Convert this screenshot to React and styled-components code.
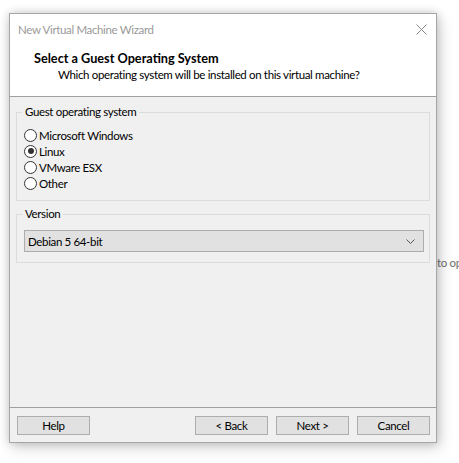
import styled, { createGlobalStyle } from "styled-components";

const Global = createGlobalStyle`
  html, body {
    margin: 0;
    background: #ffffff;
    font-family: Lato, "Noto Sans", "Liberation Sans", sans-serif;
    font-size: 11.5px;
    letter-spacing: -0.35px;
  }
`;

const Page = styled.div`
  position: relative;
  width: 459px;
  height: 463px;
  overflow: hidden;
  padding: 13px 0 0 9px;
  box-sizing: border-box;
`;

const Behind = styled.div`
  position: absolute;
  left: 437px;
  top: 255px;
  color: #6e6e6e;
  line-height: 16px;
  white-space: nowrap;
`;

const Window = styled.div`
  position: relative;
  width: 428px;
  height: 430px;
  box-sizing: border-box;
  border: 1px solid #a6a6a6;
  background: #f0f0f0;
  box-shadow: 0 0 9px rgba(0, 0, 0, 0.18), 3px 5px 14px rgba(0, 0, 0, 0.16);
  display: flex;
  flex-direction: column;
`;

const Header = styled.div`
  background: #ffffff;
  height: 82px;
  border-bottom: 1px solid #a0a0a0;
  display: flex;
  flex-direction: column;
`;

const TitleBar = styled.div`
  height: 30px;
  display: flex;
  align-items: center;
  justify-content: space-between;
  padding: 0 8px 0 8px;
  color: #999999;
`;

const Close = styled.svg`
  width: 11px;
  height: 11px;
  margin-right: 1px;
`;

const Heading = styled.div`
  padding: 7px 0 0 24px;
  font-weight: bold;
  font-size: 12.7px;
  letter-spacing: 0;
  color: #000;
  line-height: 15px;
`;

const SubHeading = styled.div`
  padding: 1px 0 0 48px;
  color: #000;
  line-height: 16px;
`;

const Body = styled.div`
  flex: 1;
  padding: 7px 6px 0 6px;
  display: flex;
  flex-direction: column;
  gap: 5px;
`;

const Group = styled.fieldset`
  margin: 0;
  border: 1px solid #dcdcdc;
  padding: ${(p) => p.$pad};
  display: flex;
  flex-direction: column;
`;

const Legend = styled.legend`
  margin-left: -2px;
  padding: 0 3px;
  line-height: 16px;
  color: #000;
`;

const RadioRow = styled.label`
  display: flex;
  align-items: center;
  height: 16px;
  color: #000;
`;

const Circle = styled.span`
  width: 11px;
  height: 11px;
  border: 1px solid #333333;
  border-radius: 50%;
  background: #ffffff;
  display: flex;
  align-items: center;
  justify-content: center;
  margin-right: 2px;
  flex: none;
  &::after {
    content: "";
    width: 6px;
    height: 6px;
    border-radius: 50%;
    background: ${(p) => (p.$on ? "#333333" : "transparent")};
  }
`;

const Select = styled.div`
  height: 20px;
  border: 1px solid #adadad;
  background: #e1e1e1;
  display: flex;
  align-items: center;
  justify-content: space-between;
  padding: 0 8px 0 3px;
  color: #000;
`;

const Footer = styled.div`
  border-top: 1px solid #a0a0a0;
  padding: 8px 6px 7px 7px;
  display: flex;
  gap: 8px;
`;

const Button = styled.button`
  width: 73px;
  height: 19px;
  box-sizing: border-box;
  border: 1px solid #adadad;
  background: #e1e1e1;
  font: inherit;
  letter-spacing: inherit;
  color: #000;
  padding: 0;
  line-height: 16px;
  margin-left: ${(p) => (p.$push ? "auto" : "0")};
`;

const options = [
  { name: "Microsoft Windows", on: false },
  { name: "Linux", on: true },
  { name: "VMware ESX", on: false },
  { name: "Other", on: false },
];

export default function App() {
  return (
    <>
      <Global />
      <Page>
        <Behind>to op</Behind>
        <Window>
          <Header>
            <TitleBar>
              <span>New Virtual Machine Wizard</span>
              <Close viewBox="0 0 11 11">
                <path d="M0.5 0.5 L10.5 10.5 M10.5 0.5 L0.5 10.5" stroke="#8a8a8a" strokeWidth="1" fill="none" />
              </Close>
            </TitleBar>
            <Heading>Select a Guest Operating System</Heading>
            <SubHeading>Which operating system will be installed on this virtual machine?</SubHeading>
          </Header>
          <Body>
            <Group $pad="7px 6px 9px 7px">
              <Legend>Guest operating system</Legend>
              {options.map((o) => (
                <RadioRow key={o.name}>
                  <Circle $on={o.on} />
                  {o.name}
                </RadioRow>
              ))}
            </Group>
            <Group $pad="8px 5px 10px 7px">
              <Legend>Version</Legend>
              <Select>
                <span>Debian 5 64-bit</span>
                <svg width="9" height="5" viewBox="0 0 9 5">
                  <path d="M0.5 0.5 L4.5 4.5 L8.5 0.5" stroke="#555" strokeWidth="1" fill="none" />
                </svg>
              </Select>
            </Group>
          </Body>
          <Footer>
            <Button>Help</Button>
            <Button $push>&lt; Back</Button>
            <Button>Next &gt;</Button>
            <Button>Cancel</Button>
          </Footer>
        </Window>
      </Page>
    </>
  );
}
